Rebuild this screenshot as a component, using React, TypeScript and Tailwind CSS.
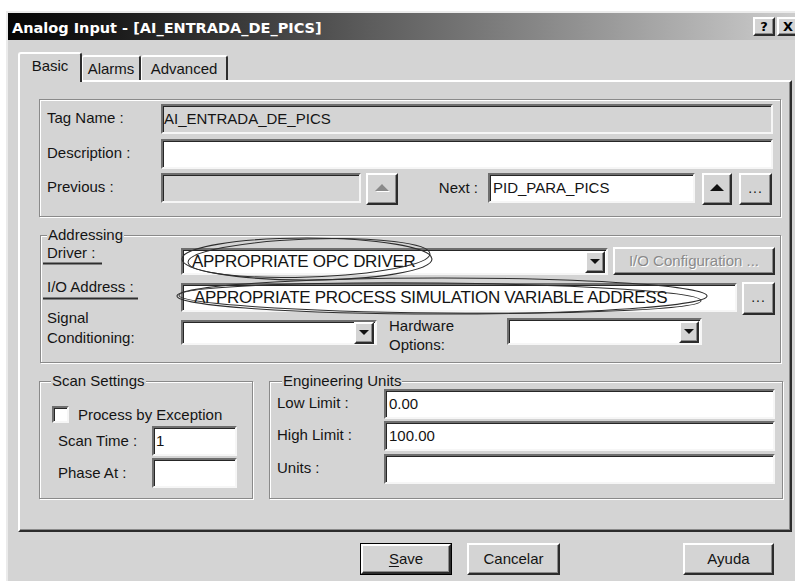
import React from "react";

// Classic 3D edges
const SUNKEN =
  "border-2 border-t-[#6e6e6e] border-l-[#6e6e6e] border-r-[#f6f6f6] border-b-[#f6f6f6] shadow-[inset_1px_1px_0_#262626]";
const RAISED =
  "border-2 border-t-white border-l-white border-r-[#2c2c2c] border-b-[#2c2c2c] shadow-[inset_-1px_-1px_0_#8a8a8a] bg-[#d4d4d4]";
const ETCHED = "border border-[#8a8a8a] shadow-[inset_1px_1px_0_#fff,1px_1px_0_#fff]";

type Cls = { className?: string; children?: React.ReactNode };

function Field({ className = "", children, gray }: Cls & { gray?: boolean }) {
  return (
    <div
      className={`flex items-center overflow-hidden whitespace-nowrap ${gray ? "bg-[#d4d4d4]" : "bg-white"} ${SUNKEN} ${className}`}
    >
      {children}
    </div>
  );
}

function Button({ className = "", children }: Cls) {
  return <div className={`flex items-center justify-center ${RAISED} ${className}`}>{children}</div>;
}

function UpArrow({ disabled }: { disabled?: boolean }) {
  return (
    <svg width="16" height="9" viewBox="0 0 16 9">
      {disabled && <polygon points="9,1 16,8 2,8" fill="#fff" />}
      <polygon points="8,0 15,7 1,7" fill={disabled ? "#8a8a8a" : "#111"} />
    </svg>
  );
}

function DownArrow() {
  return (
    <svg width="10" height="6" viewBox="0 0 10 6">
      <polygon points="0,0 10,0 5,5" fill="#111" />
    </svg>
  );
}

function Combo({ className = "", children }: Cls) {
  return (
    <div className={`flex items-center bg-white ${SUNKEN} ${className}`}>
      <div className="flex-1 overflow-hidden whitespace-nowrap">{children}</div>
      <div className={`mr-[1px] flex h-[22px] w-[20px] items-center justify-center ${RAISED}`}>
        <DownArrow />
      </div>
    </div>
  );
}

function Dots() {
  return <span className="pb-[2px] text-[14px] leading-none tracking-[1px]">...</span>;
}

function CaptionButton({ children }: Cls) {
  return (
    <div
      className={`flex h-[19px] w-[22px] items-center justify-center font-['DejaVu_Sans',sans-serif] text-[13px] font-bold leading-none text-black ${RAISED}`}
    >
      {children}
    </div>
  );
}

function Legend({ className = "", children }: Cls) {
  return <legend className={`bg-[#d4d4d4] px-[1px] leading-[16px] ${className}`}>{children}</legend>;
}

function GeneralGroup() {
  return (
    <div className={`flex h-[118px] w-[742px] flex-col pl-[7px] pt-[4px] ${ETCHED}`}>
      <div className="flex h-[30px] items-center">
        <span className="w-[114px] pb-[2px]">Tag Name :</span>
        <Field gray className="h-[30px] w-[612px] pl-[1px] pb-[1px]">
          AI_ENTRADA_DE_PICS
        </Field>
      </div>
      <div className="mt-[5px] flex h-[30px] items-center">
        <span className="w-[114px] pb-[2px]">Description :</span>
        <Field className="h-[30px] w-[612px]" />
      </div>
      <div className="mt-[4px] flex h-[32px] items-start">
        <span className="mt-[5px] w-[114px]">Previous :</span>
        <Field gray className="h-[30px] w-[200px]" />
        <Button className="ml-[5px] h-[32px] w-[32px] pb-[2px]">
          <UpArrow disabled />
        </Button>
        <span className="mt-[6px] w-[90px] pr-[10px] text-right">Next :</span>
        <Field className="h-[30px] w-[207px] pl-[3px] pb-[1px]">PID_PARA_PICS</Field>
        <Button className="ml-[7px] h-[32px] w-[30px] pb-[2px]">
          <UpArrow />
        </Button>
        <Button className="ml-[7px] h-[32px] w-[33px] items-end pb-[6px]">
          <Dots />
        </Button>
      </div>
    </div>
  );
}

function AddressingGroup() {
  return (
    <fieldset className={`ml-[1px] mt-[10px] h-[136px] w-[741px] pl-[6px] ${ETCHED}`}>
      <Legend>Addressing</Legend>
      <div className="flex flex-col pt-[1px]">
        <div className="flex h-[31px] items-start">
          <span className="w-[134px]">Driver :</span>
          <Combo className="mt-[4px] h-[27px] w-[427px] pl-[9px] pt-[1px] text-[17px] tracking-[-0.3px]">
            APPROPRIATE OPC DRIVER
          </Combo>
          <Button className="ml-[5px] mt-[3px] h-[28px] w-[162px] text-[#8a8a8a] [text-shadow:1px_1px_0_#fff]">
            I/O Configuration ...
          </Button>
        </div>
        <div className="mt-[3px] flex h-[30px] items-start">
          <span className="w-[134px]">I/O Address :</span>
          <Field className="mt-[5px] h-[29px] w-[556px] pl-[11px] text-[17px] tracking-[-0.3px]">
            APPROPRIATE PROCESS SIMULATION VARIABLE ADDRESS
          </Field>
          <Button className="ml-[5px] mt-[4px] h-[33px] w-[33px] items-end pb-[7px]">
            <Dots />
          </Button>
        </div>
        <div className="flex items-start">
          <span className="w-[134px] leading-[20px]">
            Signal
            <br />
            Conditioning:
          </span>
          <Combo className="mt-[12px] h-[25px] w-[196px]" />
          <span className="ml-[12px] mt-[8px] w-[118px] leading-[19px]">
            Hardware
            <br />
            Options:
          </span>
          <Combo className="mt-[10px] h-[27px] w-[195px]" />
        </div>
      </div>
    </fieldset>
  );
}

function ScanGroup() {
  return (
    <fieldset className={`h-[126px] w-[214px] pl-[11px] ${ETCHED}`}>
      <Legend>Scan Settings</Legend>
      <div className="flex flex-col">
        <div className="mt-[16px] flex h-[19px] items-center">
          <div className={`ml-[1px] h-[17px] w-[17px] bg-white ${SUNKEN}`} />
          <span className="ml-[9px]">Process by Exception</span>
        </div>
        <div className="mt-[2px] flex h-[30px] items-center">
          <span className="ml-[7px] w-[94px]">Scan Time :</span>
          <Field className="h-[30px] w-[85px] pl-[2px]">1</Field>
        </div>
        <div className="mt-[2px] flex h-[30px] items-center">
          <span className="ml-[7px] w-[94px]">Phase At :</span>
          <Field className="h-[30px] w-[85px]" />
        </div>
      </div>
    </fieldset>
  );
}

function UnitsGroup() {
  return (
    <fieldset className={`ml-[16px] h-[126px] w-[514px] pl-[7px] ${ETCHED}`}>
      <Legend className="ml-[5px]">Engineering Units</Legend>
      <div className="flex flex-col">
        <div className="flex h-[30px] items-center">
          <span className="w-[107px] pb-[2px]">Low Limit :</span>
          <Field className="h-[30px] w-[391px] pl-[3px]">0.00</Field>
        </div>
        <div className="mt-[2px] flex h-[30px] items-center">
          <span className="w-[107px] pb-[2px]">High Limit :</span>
          <Field className="h-[30px] w-[391px] pl-[3px]">100.00</Field>
        </div>
        <div className="mt-[3px] flex h-[30px] items-center">
          <span className="w-[107px] pb-[2px]">Units :</span>
          <Field className="h-[30px] w-[391px]" />
        </div>
      </div>
    </fieldset>
  );
}

function Annotations() {
  return (
    <svg
      className="pointer-events-none absolute left-0 top-0"
      width="795"
      height="581"
      viewBox="0 0 795 581"
      fill="none"
      stroke="#2e2e2e"
    >
      <line x1="43" y1="263.5" x2="102" y2="263.5" strokeWidth="2" />
      <line x1="43" y1="298.5" x2="138" y2="298.5" strokeWidth="2" />
      <ellipse cx="307" cy="259" rx="125" ry="21" strokeWidth="1.1" />
      <ellipse cx="309" cy="258" rx="121" ry="19" transform="rotate(-2 309 258)" strokeWidth="1" />
      <ellipse cx="442" cy="296" rx="265" ry="18" strokeWidth="1.1" />
      <ellipse cx="440" cy="298" rx="261" ry="15" transform="rotate(0.6 440 298)" strokeWidth="1" />
    </svg>
  );
}

export default function App() {
  return (
    <div className="relative h-[581px] w-[795px] overflow-hidden bg-white font-['Liberation_Sans',Arial,sans-serif] text-[15px] leading-[18px] text-[#141414]">
      <div className="ml-[6px] mt-[11px] flex h-[590px] w-[800px] flex-col border-l-2 border-t-2 border-[#ebebeb] bg-[#d4d4d4]">
        {/* caption bar */}
        <div className="flex h-[27px] items-center bg-linear-to-r from-[#050505] via-[#5c5c5c] via-45% to-[#d0d0d0] pl-[4px] pr-[7px]">
          <span className="pt-[2px] font-['DejaVu_Sans',sans-serif] text-[14.5px] font-bold text-white">
            Analog Input - [AI_ENTRADA_DE_PICS]
          </span>
          <div className="ml-auto flex gap-[2px]">
            <CaptionButton>?</CaptionButton>
            <CaptionButton>X</CaptionButton>
          </div>
        </div>

        <div className="flex flex-col pl-[10px] pt-[12px]">
          {/* tabs */}
          <div className="flex h-[28px] items-end">
            <div className="relative z-10 -mb-[2px] flex h-[30px] w-[64px] items-center justify-center rounded-t-[3px] border-l-2 border-r-2 border-t-2 border-l-white border-r-[#2c2c2c] border-t-white bg-[#d4d4d4] pb-[4px]">
              Basic
            </div>
            <div className="flex h-[25px] w-[59px] items-center justify-center rounded-t-[3px] border-l border-r-2 border-t-2 border-l-white border-r-[#2c2c2c] border-t-white pt-[1px]">
              Alarms
            </div>
            <div className="flex h-[25px] w-[87px] items-center justify-center rounded-t-[3px] border-l border-r-2 border-t-2 border-l-white border-r-[#2c2c2c] border-t-white pt-[1px]">
              Advanced
            </div>
          </div>

          {/* tab page */}
          <div className="flex h-[452px] w-[774px] flex-col border-2 border-b-[#2c2c2c] border-l-white border-r-[#2c2c2c] border-t-white pl-[19px] pt-[17px] shadow-[inset_-1px_-1px_0_#8a8a8a]">
            <GeneralGroup />
            <AddressingGroup />
            <div className="mt-[10px] flex">
              <ScanGroup />
              <UnitsGroup />
            </div>
          </div>

          {/* dialog buttons */}
          <div className="mt-[11px] flex">
            <div className="ml-[342px] h-[32px] w-[92px] border border-black">
              <Button className="h-full w-full">
                <span>
                  <span className="underline underline-offset-2">S</span>ave
                </span>
              </Button>
            </div>
            <Button className="ml-[15px] h-[32px] w-[93px]">Cancelar</Button>
            <Button className="ml-[123px] h-[32px] w-[91px]">Ayuda</Button>
          </div>
        </div>
      </div>
      <Annotations />
    </div>
  );
}
